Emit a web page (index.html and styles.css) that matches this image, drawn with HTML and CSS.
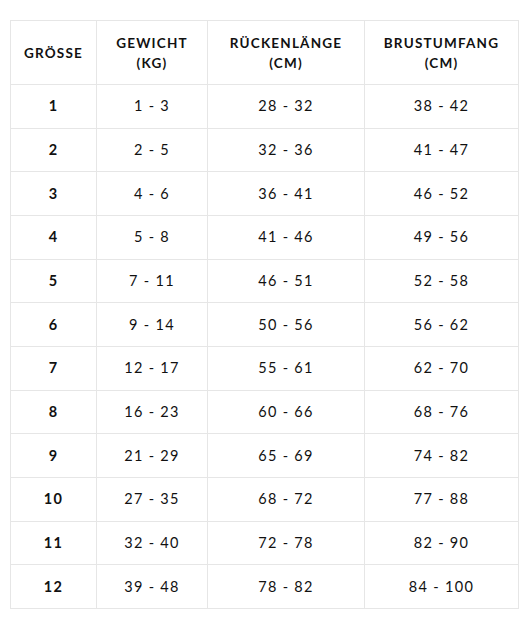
FILE: index.html
```html
<!DOCTYPE html>
<html lang="de">
<head>
<meta charset="utf-8">
<link rel="stylesheet" href="styles.css">
</head>
<body>
<table class="size-table">
  <colgroup>
    <col class="c1"><col class="c2"><col class="c3"><col class="c4">
  </colgroup>
  <thead>
    <tr><th>GRÖSSE</th><th>GEWICHT<br>(KG)</th><th>RÜCKENLÄNGE<br>(CM)</th><th>BRUSTUMFANG<br>(CM)</th></tr>
  </thead>
  <tbody>
    <tr><td class="size">1</td><td>1 - 3</td><td>28 - 32</td><td>38 - 42</td></tr>
    <tr><td class="size">2</td><td>2 - 5</td><td>32 - 36</td><td>41 - 47</td></tr>
    <tr><td class="size">3</td><td>4 - 6</td><td>36 - 41</td><td>46 - 52</td></tr>
    <tr><td class="size">4</td><td>5 - 8</td><td>41 - 46</td><td>49 - 56</td></tr>
    <tr><td class="size">5</td><td>7 - 11</td><td>46 - 51</td><td>52 - 58</td></tr>
    <tr><td class="size">6</td><td>9 - 14</td><td>50 - 56</td><td>56 - 62</td></tr>
    <tr><td class="size">7</td><td>12 - 17</td><td>55 - 61</td><td>62 - 70</td></tr>
    <tr><td class="size">8</td><td>16 - 23</td><td>60 - 66</td><td>68 - 76</td></tr>
    <tr><td class="size">9</td><td>21 - 29</td><td>65 - 69</td><td>74 - 82</td></tr>
    <tr><td class="size">10</td><td>27 - 35</td><td>68 - 72</td><td>77 - 88</td></tr>
    <tr><td class="size">11</td><td>32 - 40</td><td>72 - 78</td><td>82 - 90</td></tr>
    <tr><td class="size">12</td><td>39 - 48</td><td>78 - 82</td><td>84 - 100</td></tr>
  </tbody>
</table>
</body>
</html>
```

FILE: styles.css
```css
html, body {
  margin: 0;
  background: #ffffff;
}
body {
  padding: 20px 0 0 10px;
  font-family: "Lato", "Open Sans", "Liberation Sans", sans-serif;
  color: #111111;
}
.size-table {
  border-collapse: collapse;
  width: 508px;
  table-layout: fixed;
}
.c1 { width: 86px; }
.c2 { width: 111px; }
.c3 { width: 157px; }
.c4 { width: 154px; }
.size-table th,
.size-table td {
  border: 1px solid #e6e6e6;
  text-align: center;
  vertical-align: middle;
  padding: 0;
}
.size-table th {
  height: 63px;
  font-size: 13.5px;
  font-weight: 700;
  line-height: 20px;
  letter-spacing: 1.2px;
}
.size-table td {
  height: 42.67px;
  line-height: 18px;
  font-size: 14.5px;
  letter-spacing: 1.3px;
  font-weight: 400;
}
.size-table td.size {
  font-weight: 700;
}
```
